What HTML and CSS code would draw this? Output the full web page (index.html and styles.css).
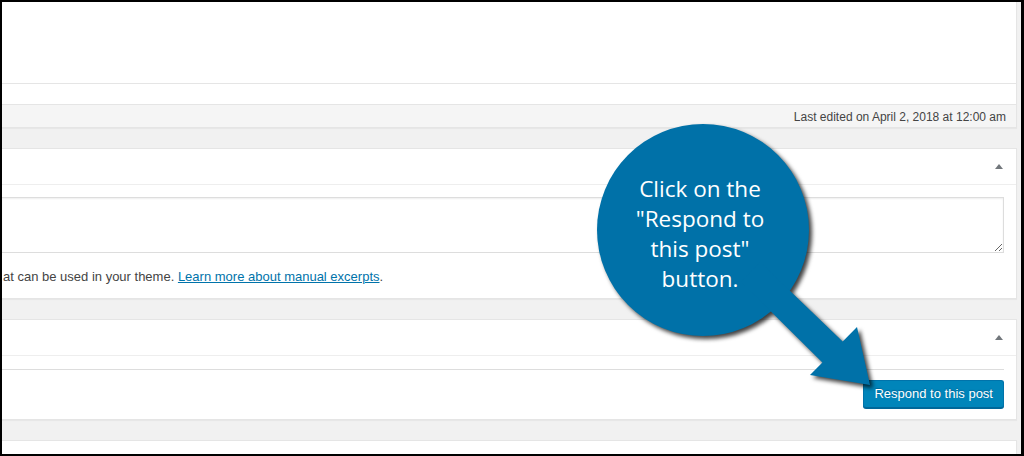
FILE: index.html
```html
<!DOCTYPE html>
<html lang="en">
<head>
  <meta charset="UTF-8">
  <title>Respond to this post</title>
  <link rel="stylesheet" href="styles.css">
</head>
<body>
  <div class="frame">
    <div class="wrap">
      <div class="editor">
        <div class="editor-body"></div>
        <div class="editor-foot"></div>
        <div class="status">Last edited on April 2, 2018 at 12:00 am</div>
      </div>

      <div class="postbox">
        <div class="postbox-head"><span class="toggle"></span></div>
        <div class="inside">
          <textarea class="excerpt"></textarea>
          <p class="note">at can be used in your theme. <a href="#">Learn more about manual excerpts</a>.</p>
        </div>
      </div>

      <div class="postbox">
        <div class="postbox-head"><span class="toggle"></span></div>
        <div class="inside inside-actions">
          <div class="discussion"></div>
          <div class="actions">
            <button class="button-primary">Respond to this post</button>
          </div>
        </div>
      </div>

      <div class="postbox">
        <div class="postbox-head"></div>
      </div>
    </div>

    <!-- callout over the page -->
    <div class="callout">
      <svg width="1024" height="456" viewBox="0 0 1024 456">
        <g class="bubble">
          <circle cx="703" cy="230" r="106"/>
          <polygon points="760,262 842.7,341.6 857,327 870,385 810,375 822.4,362.4 741,282"/>
        </g>
      </svg>
      <p class="callout-text">Click on the<br>"Respond to<br>this post"<br>button.</p>
    </div>
  </div>
</body>
</html>
```

FILE: styles.css
```css
* {
  box-sizing: border-box;
}

body {
  margin: 0;
  font-family: 'Liberation Sans', Arial, sans-serif;
  font-size: 13px;
  color: #444;
}

.frame {
  position: relative;
  width: 1024px;
  height: 456px;
  border: 2px solid #000;
  border-right-width: 3px;
  padding-right: 4px;
  background: #f1f1f1;
  overflow: hidden;
}

/* left side of the screen is cropped */
.wrap {
  margin-left: -14px;
}

/* Editor bottom + status bar */
.editor {
  background: #fff;
  border-right: 1px solid #e5e5e5;
  border-bottom: 1px solid #e5e5e5;
  box-shadow: 0 1px 1px rgba(0, 0, 0, 0.04);
  margin-bottom: 20px;
}

.editor-body {
  height: 82px;
  border-bottom: 1px solid #e5e5e5;
}

.editor-foot {
  height: 20px;
}

.status {
  height: 23px;
  padding: 2px 10px 0 0;
  border-top: 1px solid #e5e5e5;
  background: #f5f5f5;
  font-size: 12px;
  line-height: 20px;
  text-align: right;
  color: #444;
}

/* Meta boxes */
.postbox {
  background: #fff;
  border: 1px solid #e5e5e5;
  box-shadow: 0 1px 1px rgba(0, 0, 0, 0.04);
  margin-bottom: 20px;
}

.postbox-head {
  height: 36px;
  border-bottom: 1px solid #eee;
  display: flex;
  justify-content: flex-end;
  align-items: center;
  padding-right: 13px;
}

.toggle {
  width: 0;
  height: 0;
  border-left: 4px solid transparent;
  border-right: 4px solid transparent;
  border-bottom: 5px solid #72777c;
}

.inside {
  padding: 12px 12px 11px;
}

.excerpt {
  display: block;
  width: 100%;
  height: 56px;
  margin: 0;
  border: 1px solid #ddd;
  box-shadow: inset 0 1px 2px rgba(0, 0, 0, 0.07);
  background: #fff;
}

.note {
  margin: 14px 0 0 2px;
  line-height: 20px;
}

.note a {
  color: #0073aa;
}

.inside-actions {
  padding-top: 0;
}

.discussion {
  height: 14px;
  border-bottom: 1px solid #ddd;
}

.actions {
  display: flex;
  justify-content: flex-end;
  padding-top: 10px;
}

.button-primary {
  height: 28px;
  padding: 0 10px 1px;
  font-family: 'Liberation Sans', Arial, sans-serif;
  font-size: 13px;
  line-height: 26px;
  color: #fff;
  background: #0085ba;
  border: 1px solid #0073aa;
  border-bottom-color: #006799;
  border-radius: 3px;
  box-shadow: 0 1px 0 #006799;
  text-shadow: 0 -1px 1px #006799;
  cursor: pointer;
}

/* Callout bubble */
.callout {
  position: absolute;
  left: -2px;
  top: -2px;
  width: 1024px;
  height: 456px;
  pointer-events: none;
}

.callout svg {
  display: block;
}

.bubble {
  fill: #0071a8;
  filter: drop-shadow(3px 3px 2px rgba(0, 0, 0, 0.75));
}

.callout-text {
  position: absolute;
  left: 600px;
  top: 174px;
  width: 200px;
  margin: 0;
  font-family: 'Open Sans', sans-serif;
  font-size: 22.5px;
  line-height: 30px;
  text-align: center;
  color: #fff;
}
```
